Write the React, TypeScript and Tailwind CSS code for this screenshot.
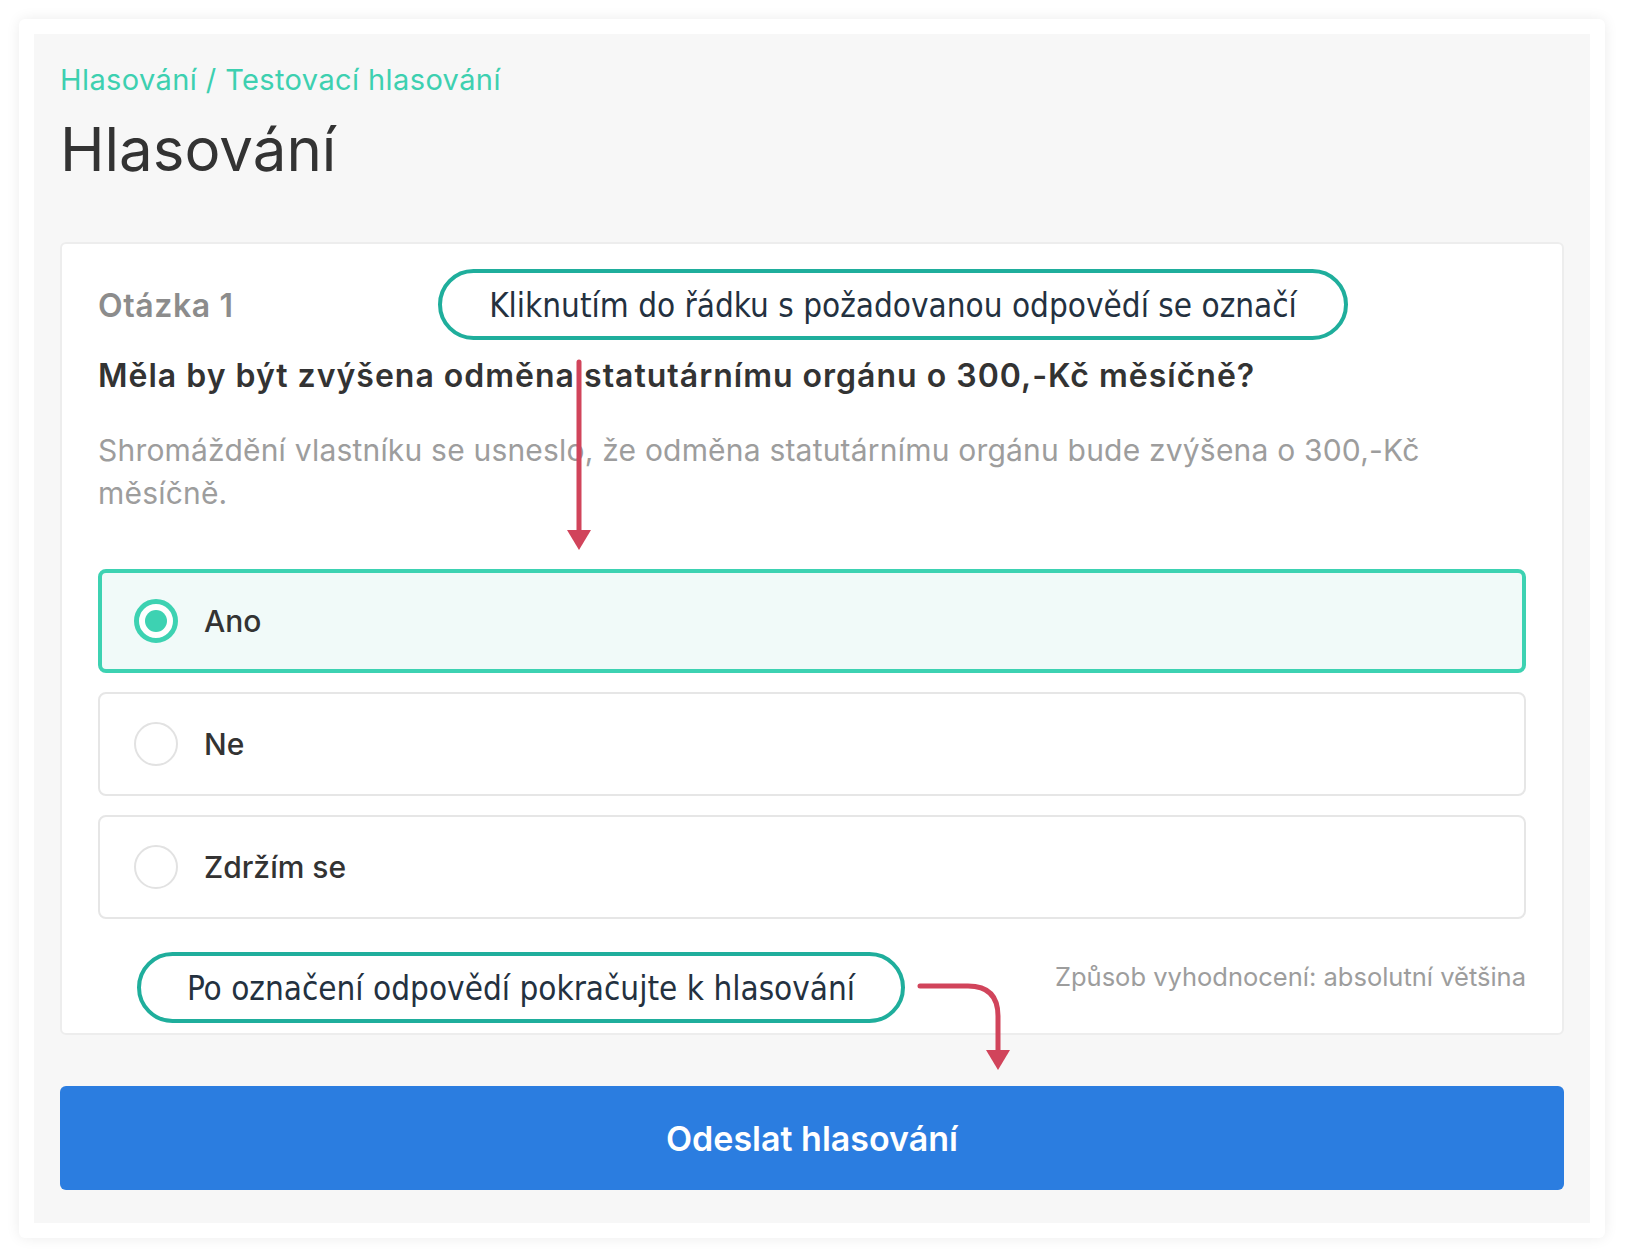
import React from 'react';

const options = [
  { label: 'Ano', selected: true },
  { label: 'Ne', selected: false },
  { label: 'Zdržím se', selected: false },
];

function Radio({ selected }: { selected: boolean }) {
  if (selected) {
    return (
      <span className="w-[44px] h-[44px] rounded-full border-[5px] border-[#3dd2b2] bg-white flex items-center justify-center shrink-0">
        <span className="w-[22px] h-[22px] rounded-full bg-[#3dd2b2]" />
      </span>
    );
  }
  return <span className="w-[44px] h-[44px] rounded-full border-2 border-[#e2e2e2] bg-white shrink-0" />;
}

export default function App() {
  return (
    <div className="relative w-[1636px] h-[1258px] bg-white font-['Inter',sans-serif] overflow-hidden">
      <div className="ml-[19px] mt-[19px] w-[1586px] bg-white p-[15px] rounded-md shadow-[0_0_14px_rgba(0,0,0,0.08)]">
        <div className="bg-[#f7f7f7] px-[26px] pt-[28px] pb-[33px]">
          <div className="text-[29px] leading-[36px] tracking-[0.4px] text-[#3dd0b0]">Hlasování / Testovací hlasování</div>
          <h1 className="mt-[13px] text-[60px] leading-[76px] text-[#333] font-normal">Hlasování</h1>

          <div className="mt-[55px] bg-white border-2 border-[#ededed] rounded-md px-[36px] pt-[42px] pb-[39px]">
            <div className="text-[32px] leading-[40px] tracking-[0.6px] font-semibold text-[#8c8c8c]">Otázka 1</div>
            <div className="mt-[30px] text-[32px] leading-[40px] tracking-[1px] font-semibold text-[#333]">
              Měla by být zvýšena odměna statutárnímu orgánu o 300,-Kč měsíčně?
            </div>
            <p className="mt-[33px] text-[30px] leading-[43px] tracking-[0.2px] text-[#9d9d9d] pr-[60px]">
              Shromáždění vlastníku se usneslo, že odměna statutárnímu orgánu bude zvýšena o 300,-Kč měsíčně.
            </p>

            <div className="mt-[54px] flex flex-col gap-[19px]">
              {options.map((o) => (
                <div
                  key={o.label}
                  className={
                    o.selected
                      ? 'h-[104px] flex items-center gap-[26px] px-[32px] rounded-lg border-[4px] border-[#3dd2b2] bg-[#f1faf9]'
                      : 'h-[104px] flex items-center gap-[26px] px-[34px] rounded-lg border-2 border-[#e6e6e6] bg-white'
                  }
                >
                  <Radio selected={o.selected} />
                  <span className="text-[30px] font-medium text-[#333]">{o.label}</span>
                </div>
              ))}
            </div>

            <div className="mt-[41px] text-right text-[25.5px] leading-[34px] text-[#9d9d9d]">
              Způsob vyhodnocení: absolutní většina
            </div>
          </div>

          <button className="mt-[51px] w-full h-[104px] rounded-md bg-[#2b7de0] text-white text-[34px] font-semibold">
            Odeslat hlasování
          </button>
        </div>
      </div>

      {/* annotation callouts */}
      <div className="absolute left-[438px] top-[269px] w-[910px] h-[71px] rounded-full border-[4px] border-[#1fae9c] bg-white flex items-center justify-center pt-[3px] text-[33px] text-[#24313f] font-['Liberation_Sans_Narrow','DejaVu_Sans_Condensed',sans-serif]">
        Kliknutím do řádku s požadovanou odpovědí se označí
      </div>
      <div className="absolute left-[137px] top-[952px] w-[768px] h-[71px] rounded-full border-[4px] border-[#1fae9c] bg-white flex items-center justify-center pt-[3px] text-[33px] text-[#24313f] font-['Liberation_Sans_Narrow','DejaVu_Sans_Condensed',sans-serif]">
        Po označení odpovědí pokračujte k hlasování
      </div>

      <svg className="absolute left-0 top-0 pointer-events-none" width="1636" height="1258">
        <g stroke="#d1445b" strokeWidth="5" fill="none" strokeLinecap="round">
          <path d="M579 362 L579 532" />
          <path d="M920 986 L968 986 Q998 986 998 1016 L998 1052" />
        </g>
        <g fill="#d1445b">
          <path d="M567 530 L591 530 L579 550 Z" />
          <path d="M986 1050 L1010 1050 L998 1070 Z" />
        </g>
      </svg>
    </div>
  );
}
